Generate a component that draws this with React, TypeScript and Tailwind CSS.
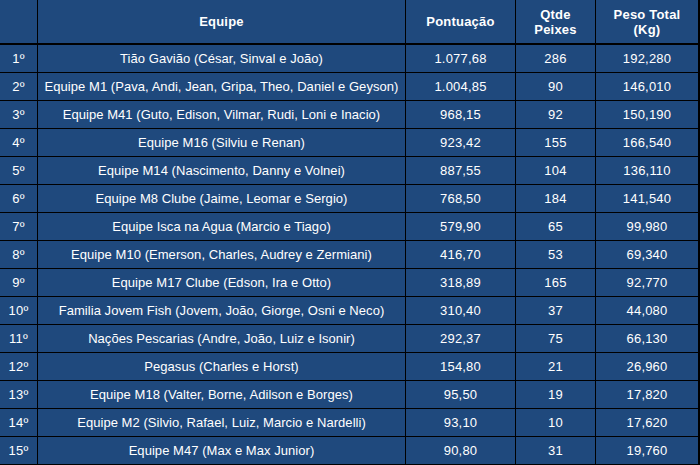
import React from "react";

const rows: [string, string, string, string, string][] = [
  ["1º", "Tião Gavião (César, Sinval e João)", "1.077,68", "286", "192,280"],
  ["2º", "Equipe M1 (Pava, Andi, Jean, Gripa, Theo, Daniel e Geyson)", "1.004,85", "90", "146,010"],
  ["3º", "Equipe M41 (Guto, Edison, Vilmar, Rudi, Loni e Inacio)", "968,15", "92", "150,190"],
  ["4º", "Equipe M16 (Silviu e Renan)", "923,42", "155", "166,540"],
  ["5º", "Equipe M14 (Nascimento, Danny e Volnei)", "887,55", "104", "136,110"],
  ["6º", "Equipe M8 Clube (Jaime, Leomar e Sergio)", "768,50", "184", "141,540"],
  ["7º", "Equipe Isca na Agua (Marcio e Tiago)", "579,90", "65", "99,980"],
  ["8º", "Equipe M10 (Emerson, Charles, Audrey e Zermiani)", "416,70", "53", "69,340"],
  ["9º", "Equipe M17 Clube (Edson, Ira e Otto)", "318,89", "165", "92,770"],
  ["10º", "Familia Jovem Fish (Jovem, João, Giorge, Osni e Neco)", "310,40", "37", "44,080"],
  ["11º", "Nações Pescarias (Andre, João, Luiz e Isonir)", "292,37", "75", "66,130"],
  ["12º", "Pegasus (Charles e Horst)", "154,80", "21", "26,960"],
  ["13º", "Equipe M18 (Valter, Borne, Adilson e Borges)", "95,50", "19", "17,820"],
  ["14º", "Equipe M2 (Silvio, Rafael, Luiz, Marcio e Nardelli)", "93,10", "10", "17,620"],
  ["15º", "Equipe M47 (Max e Max Junior)", "90,80", "31", "19,760"],
];

const widths = ["w-[38px]", "w-[368px]", "w-[110px]", "w-[80px]", "w-[104px]"];
const borders = ["border-r", "border-r", "border-r", "border-r", "border-r-2"];

export default function App() {
  return (
    <div className="w-[700px] h-[465px] bg-[#1f497d] text-white font-['Liberation_Sans',Arial,sans-serif] text-[13px] overflow-hidden">
      {/* Header */}
      <div className="flex h-[45px] border-b-2 border-black font-bold">
        {["", "Equipe", "Pontuação", "Qtde Peixes", "Peso Total (Kg)"].map((h, i) => (
          <div
            key={i}
            className={`${widths[i]} ${borders[i]} shrink-0 border-black flex items-center justify-center text-center leading-[15px] tracking-[0.2px]`}
          >
            {i === 3 ? (
              <span>Qtde<br />Peixes</span>
            ) : i === 4 ? (
              <span>Peso Total<br />(Kg)</span>
            ) : (
              h
            )}
          </div>
        ))}
      </div>

      {/* Body */}
      {rows.map((r, ri) => (
        <div key={ri} className="flex h-[28px] border-b border-black">
          {r.map((c, i) => (
            <div
              key={i}
              className={`${widths[i]} ${borders[i]} shrink-0 overflow-hidden border-black flex items-center justify-center whitespace-nowrap ${i === 1 ? "tracking-[0.05px]" : "tracking-[0.2px]"}`}
            >
              {c}
            </div>
          ))}
        </div>
      ))}
    </div>
  );
}
